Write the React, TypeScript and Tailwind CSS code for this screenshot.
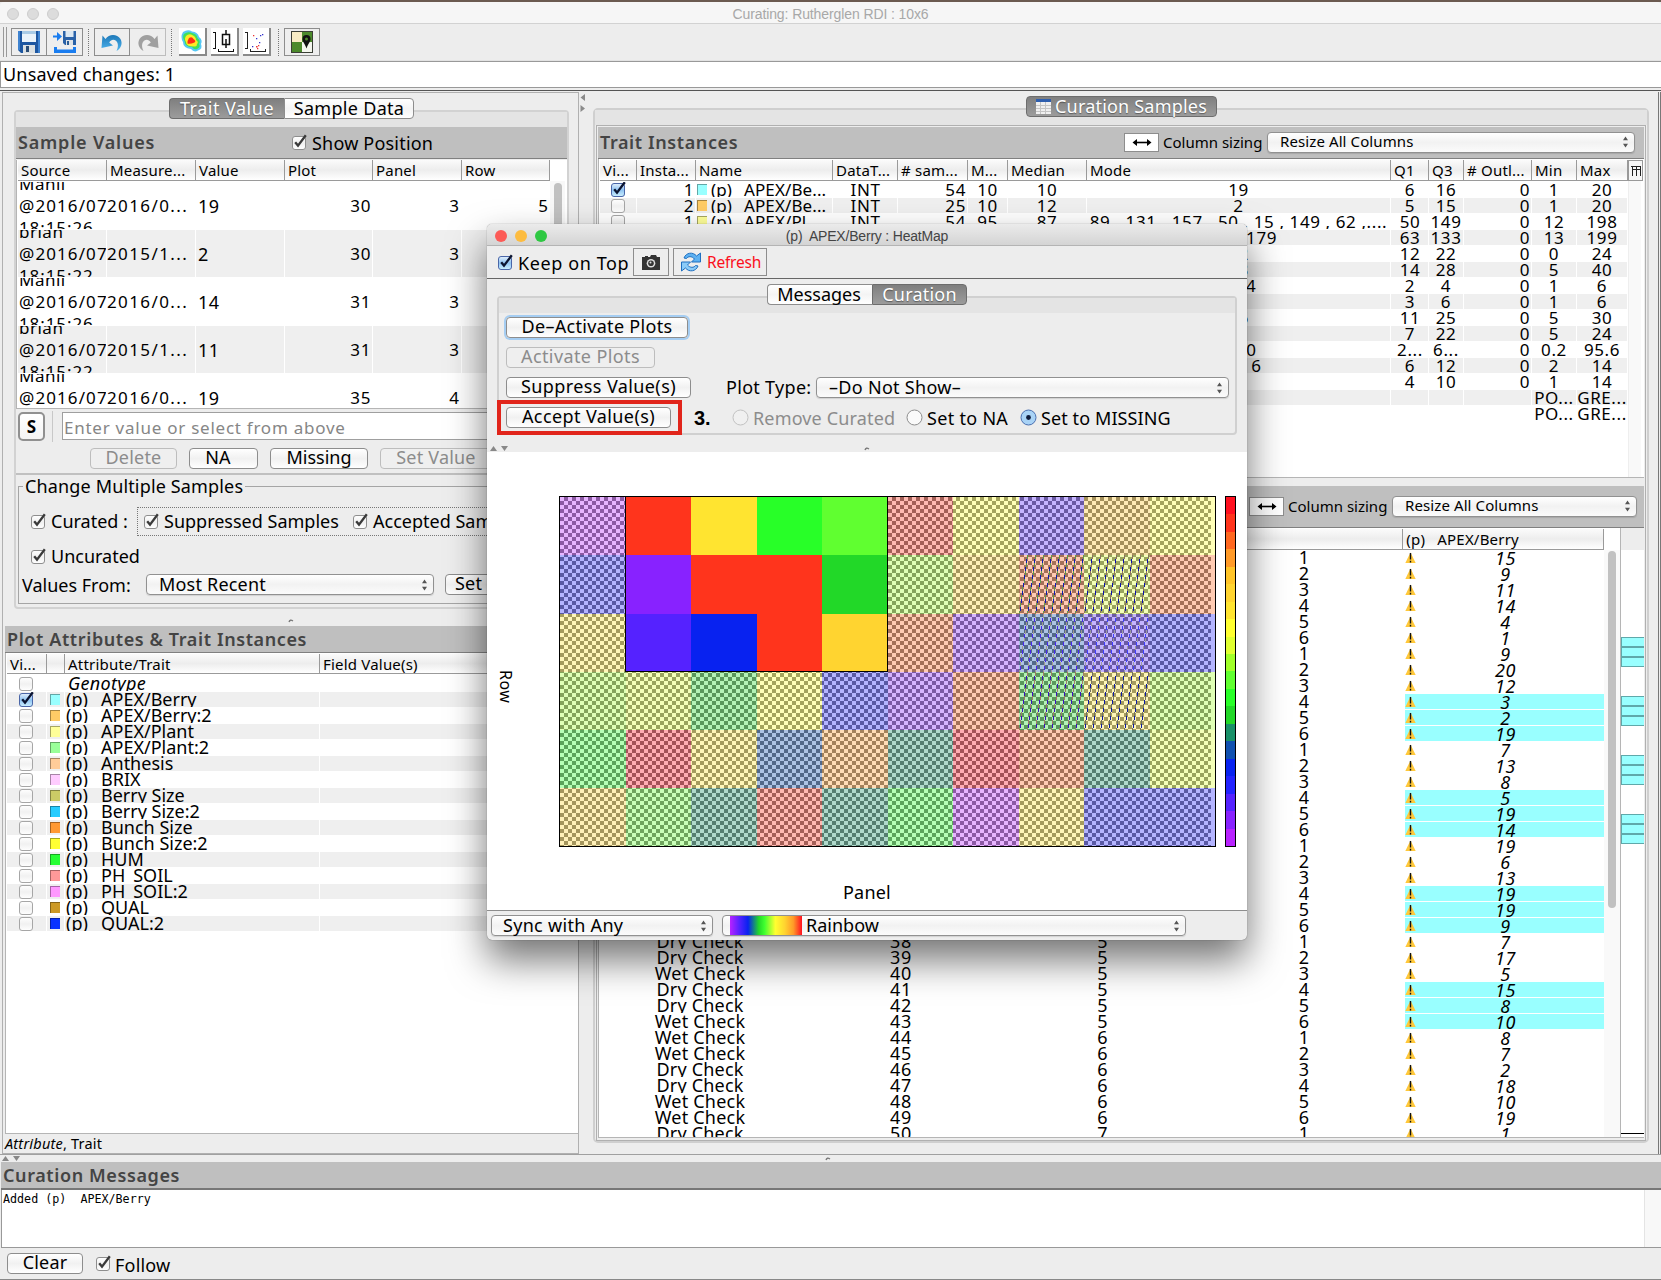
import React from "react";

const FONT = "font-['Noto_Sans','Open_Sans',sans-serif]";

function Check({ on = false, blue = false, dim = false }: { on?: boolean; blue?: boolean; dim?: boolean }) {
  return (
    <svg width="17" height="17" viewBox="0 0 17 17" className="block shrink-0">
      <defs>
        <linearGradient id="ckw" x1="0" y1="0" x2="0" y2="1">
          <stop offset="0" stopColor="#ffffff" />
          <stop offset="0.5" stopColor="#f1f1f1" />
          <stop offset="1" stopColor="#ffffff" />
        </linearGradient>
        <linearGradient id="ckb" x1="0" y1="0" x2="0" y2="1">
          <stop offset="0" stopColor="#e4f0fc" />
          <stop offset="0.5" stopColor="#8fc3f2" />
          <stop offset="1" stopColor="#cdf1ff" />
        </linearGradient>
      </defs>
      <rect x="1.5" y="2.5" width="13" height="13" rx="2.5" fill={blue ? "url(#ckb)" : "url(#ckw)"} stroke={blue ? "#4a66a8" : dim ? "#a6a6a6" : "#8e8e8e"} />
      {on && <path d="M4.2 8.2 L7 11.6 L14.8 1.2" fill="none" stroke={blue ? "#0b1430" : "#3a3a3a"} strokeWidth="2.3" />}
    </svg>
  );
}

function Btn({ children, className = "", dim = false }: { children: React.ReactNode; className?: string; dim?: boolean }) {
  return (
    <div
      className={
        "box-border flex h-[21px] shrink-0 items-center justify-center whitespace-nowrap rounded-[4px] border pb-[2px] text-[18px] leading-[19px] tracking-[0.2px] " +
        (dim
          ? "border-[#bdbdbd] bg-[#efefef] text-[#8c8c8c] "
          : "border-[#8d8d8d] bg-linear-to-b from-white via-[#f1f1f1] to-white text-black ") +
        className
      }
    >
      {children}
    </div>
  );
}

function Select({ children, className = "" }: { children: React.ReactNode; className?: string }) {
  return (
    <div
      className={
        "box-border flex h-[21px] shrink-0 items-center whitespace-nowrap rounded-[4px] border border-[#919191] bg-linear-to-b from-white via-[#f2f2f2] to-[#fbfbfb] pr-[5px] shadow-[0_1px_1px_rgba(0,0,0,0.12)] " +
        className
      }
    >
      <div className="flex min-w-0 flex-1 items-center pb-[1px]">{children}</div>
      <svg width="7" height="12" viewBox="0 0 7 12" className="shrink-0">
        <path d="M3.5 0.5 L6 4.3 H1 Z M3.5 11.5 L6 7.7 H1 Z" fill="#555" />
      </svg>
    </div>
  );
}

function Tab({ on = false, className = "", children }: { on?: boolean; className?: string; children: React.ReactNode }) {
  return (
    <div
      className={
        "box-border flex h-[21px] items-center justify-center whitespace-nowrap border text-[18px] leading-[19px] " +
        (on
          ? "border-[#6d6d6d] bg-linear-to-b from-[#7f7f7f] to-[#9c9c9c] text-white [text-shadow:0_1px_1px_rgba(0,0,0,0.4)] "
          : "border-[#8d8d8d] bg-linear-to-b from-white via-[#f4f4f4] to-white text-black ") +
        className
      }
    >
      {children}
    </div>
  );
}

const HEAD = "box-border flex h-[20px] shrink-0 border-b border-[#9a9a9a] bg-linear-to-b from-[#fbfbfb] via-[#ededed] to-white text-[15px] leading-[20px] tracking-[0.2px]";
const HCELL = "box-border overflow-hidden whitespace-nowrap border-r border-[#9a9a9a] pl-[3px]";
const TITLE = "text-[18px] font-semibold tracking-[0.6px] text-[#444]";

/* ---------- toolbar ---------- */

function ToolSep() {
  return <div className="h-[27px] w-0 border-l border-dotted border-[#777]" />;
}

function ToolBtn({ children, className = "" }: { children: React.ReactNode; className?: string }) {
  return <div className={"box-border flex h-[28px] items-center justify-center border border-[#8d8d8d] bg-[#eeeeee] " + className}>{children}</div>;
}

function Floppy({ size }: { size: number }) {
  return (
    <svg width={size} height={size} viewBox="0 0 22 22">
      <path d="M0 0 H22 V22 H3 L0 19 Z" fill="#1d56a0" />
      <path d="M0 0 H2 V19 H0 Z M20 0 H22 V22 H20 Z" fill="#3f83d0" />
      <rect x="4" y="0" width="14" height="11" fill="#eaf3fa" />
      <rect x="4" y="0" width="14" height="3" fill="#a9cbe6" />
      <rect x="5" y="14" width="12" height="8" fill="#dbe0e2" />
      <rect x="8" y="15" width="3" height="6" fill="#2b4d76" />
    </svg>
  );
}

function Toolbar() {
  return (
    <div className="flex h-[37px] shrink-0 items-center border-b border-[#e2e2e2] bg-[#ededed] pl-[3px]">
      <div className="h-[30px] w-[4px] border-x border-[#999]" />
      <div className="ml-[4px] flex">
        <ToolBtn className="w-[36px]"><Floppy size={22} /></ToolBtn>
        <ToolBtn className="w-[36px] border-l-0">
          <svg width="24" height="24" viewBox="0 0 24 24">
            <path d="M1 17 V23 H23 V17 H20 V19.500 H4 V17 Z" fill="#1a7df0" />
            <path d="M0 5.500 H4 V2 L9 6.500 L4 11 V7.500 H0 Z" fill="#1a7df0" />
            <path d="M10 1 H23 V15 H12 L10 13 Z" fill="#2a62a8" />
            <rect x="12.500" y="1" width="8" height="6" fill="#dce8f2" />
            <rect x="13" y="10" width="7" height="5" fill="#dfe3e6" />
            <rect x="14" y="11" width="2" height="4" fill="#2b5d96" />
          </svg>
        </ToolBtn>
      </div>
      <div className="mx-[5px]"><ToolSep /></div>
      <div className="flex">
        <ToolBtn className="w-[36px]">
          <svg width="24" height="22" viewBox="0 0 24 22">
            <defs>
              <linearGradient id="undo" x1="0" y1="0" x2="0" y2="1">
                <stop offset="0" stopColor="#1d78b8" />
                <stop offset="1" stopColor="#4fb4ee" />
              </linearGradient>
            </defs>
            <path d="M2.500 4.500 L5.500 8 C9 2.500 17 2.500 20.500 8 C23 12.500 21 17.500 16.500 20 C18.500 16 18.500 12 16 9.800 C13.500 7.800 11 8.500 9.200 11.500 L13 14.500 L1.500 17 Z" fill="url(#undo)" />
          </svg>
        </ToolBtn>
        <ToolBtn className="w-[36px] border-l-0 border-[#bdbdbd]">
          <svg width="24" height="22" viewBox="0 0 24 22">
            <path d="M21.500 4.500 L18.500 8 C15 2.500 7 2.500 3.500 8 C1 12.500 3 17.500 7.500 20 C5.500 16 5.500 12 8 9.800 C10.500 7.800 13 8.500 14.800 11.500 L11 14.500 L22.500 17 Z" fill="#a0a0a0" />
          </svg>
        </ToolBtn>
      </div>
      <div className="mr-[7px] ml-[5px]"><ToolSep /></div>
      <div className="flex gap-[4px]">
        <div className="box-border flex h-[28px] w-[28px] items-center justify-center border-r-2 border-b-2 border-[#8a8a8a] bg-white">
          <svg width="24" height="24" viewBox="0 0 24 24">
            <defs><filter id="hb"><feGaussianBlur stdDeviation="0.7" /></filter></defs>
            <g filter="url(#hb)">
              <path d="M3 3 Q8 0 12 2.500 Q18 3 19 8 Q23 11 21 15 Q23 20 18 21.500 Q14 24 11 20 Q3 19 3 13 Q0 8 3 3" fill="#55c8f5" />
              <path d="M4 5 Q8 2 12 4 Q17 5 17.500 9 Q21 12 19 15 Q21 18 17 20 Q14 21 12 18 Q5 18 4.500 12 Q2 8 4 5" fill="#3fe05a" />
              <path d="M6 7 Q9 4 13 6.500 Q16 8 16 11 Q19 13 17 15 Q17 18 14.500 17.500 Q6 17.500 6 13 Q4 10 6 7" fill="#ffe927" />
              <path d="M9 9 Q12 7 13.500 10 Q16.500 12 14.500 13.500 Q10 15.500 7.500 14.500 Q7 12 9 9" fill="#ff2a12" />
            </g>
          </svg>
        </div>
        <div className="box-border flex h-[28px] w-[28px] items-center justify-center border-r-2 border-b-2 border-[#8a8a8a] bg-white">
          <svg width="24" height="24" viewBox="0 0 24 24" fill="none" stroke="#111">
            <path d="M3.500 3 V20 M1 3.500 H4 M1 19.500 H4 M6 22.500 H22 M6.500 20 V23 M21.500 20 V23" strokeWidth="1" />
            <path d="M10.500 5.500 H17.500 V15.500 H10.500 Z M14 1 V6 M14 10 V19" strokeWidth="1.500" />
          </svg>
        </div>
        <div className="box-border flex h-[28px] w-[28px] items-center justify-center border-r-2 border-b-2 border-[#8a8a8a] bg-white">
          <svg width="24" height="24" viewBox="0 0 24 24">
            <path d="M3.500 3 V20 M1 3.500 H4 M1 19.500 H4 M6 22.500 H22 M6.500 20 V23 M21.500 20 V23" fill="none" stroke="#222" />
            <path d="M18 5h1.300v1.300h-1.300z M16 6h1.300v1.300h-1.300z M12 9h1.300v1.300h-1.300z M8 17h1.300v1.300h-1.300z M15 13h1.300v1.300h-1.300z" fill="#33c" />
            <path d="M9 6h1.300v1.300h-1.300z M12 17h1.600v1.600h-1.600z M14 16h1.300v1.300h-1.300z M13 19h1.300v1.300h-1.300z" fill="#e33" />
          </svg>
        </div>
      </div>
      <div className="mr-[5px] ml-[7px]"><ToolSep /></div>
      <ToolBtn className="w-[36px]">
        <svg width="22" height="22" viewBox="0 0 22 22">
          <rect x="0.500" y="0.500" width="21" height="21" fill="#4c8a2c" stroke="#3b3f36" />
          <rect x="1" y="1" width="10" height="10" fill="#f8ecc4" />
          <rect x="11" y="11" width="10" height="10" fill="#f4f6ee" />
          <path d="M15.500 17.500 C13.500 12 11.500 10.500 11.500 8 A4 4 0 0 1 19.500 8 C19.500 10.500 17.500 12 15.500 17.500" fill="#111" />
          <circle cx="15.500" cy="8" r="1.500" fill="#4c8a2c" />
        </svg>
      </ToolBtn>
    </div>
  );
}

/* ---------- left column ---------- */

const samples = [
  ["Manil", "2016/0...", "18:15:26", "19", "30", "3", "5"],
  ["brian", "2015/1...", "18:15:22", "2", "30", "3", "5"],
  ["Manil", "2016/0...", "18:15:26", "14", "31", "3", "6"],
  ["brian", "2015/1...", "18:15:22", "11", "31", "3", "6"],
  ["Manil", "2016/0...", "18:15:26", "19", "35", "4", "1"],
];

function SampleTable() {
  return (
    <div className="mt-[1px] flex h-[249px] shrink-0 flex-col overflow-hidden border-b border-l border-[#b5b5b5] bg-white pl-[1px]">
      <div className={HEAD + " h-[21px] w-[532px]"}>
        <div className={HCELL + " w-[89px]"}>Source</div>
        <div className={HCELL + " w-[89px]"}>Measure...</div>
        <div className={HCELL + " w-[89px]"}>Value</div>
        <div className={HCELL + " w-[88px]"}>Plot</div>
        <div className={HCELL + " w-[89px]"}>Panel</div>
        <div className={HCELL + " w-[88px]"}>Row</div>
      </div>
      <div className="flex flex-1 overflow-hidden">
        <div className="w-[532px] pt-[1px] text-[17px]">
          {samples.map((s, i) => {
            const c = i % 2 ? "bg-[#efefef]" : "bg-white";
            return (
              <div key={i} className="mb-[1px] flex h-[47px] gap-[1px] overflow-hidden leading-[22px]">
                <div className={"flex w-[88px] flex-col justify-center overflow-hidden pl-px tracking-[0.5px] " + c}>
                  <div className="h-[22px] shrink-0">{s[0]}</div>
                  <div className="h-[22px] shrink-0 tracking-[1.1px] whitespace-nowrap">@2016/07</div>
                  <div className="h-[22px] shrink-0 whitespace-nowrap tracking-[0.9px]">{s[2]}</div>
                </div>
                <div className={"flex w-[88px] items-center tracking-[1.4px] " + c}>{s[1]}</div>
                <div className={"flex w-[88px] items-center pl-[2px] text-[18px] tracking-[0.5px] " + c}>{s[3]}</div>
                <div className={"flex w-[87px] items-center justify-end pr-[1px] tracking-[0.6px] " + c}>{s[4]}</div>
                <div className={"flex w-[88px] items-center justify-end pr-[2px] " + c}>{s[5]}</div>
                <div className={"flex w-[88px] items-center justify-end pr-[2px] " + c}>{s[6]}</div>
              </div>
            );
          })}
        </div>
        <div className="flex w-[15px] justify-center bg-[#f8f8f8] pt-[2px]">
          <div className="h-[120px] w-[8px] rounded-full bg-[#c1c1c1]" />
        </div>
      </div>
    </div>
  );
}

const traits: [string, string][] = [
  ["APEX/Berry", "bg-[#99ffff]"],
  ["APEX/Berry:2", "bg-[#ffcc66]"],
  ["APEX/Plant", "bg-[#ffff99]"],
  ["APEX/Plant:2", "bg-[#99ff99]"],
  ["Anthesis", "bg-[#ffcc99]"],
  ["BRIX", "bg-[#ffccff]"],
  ["Berry Size", "bg-[#cccc66]"],
  ["Berry Size:2", "bg-[#26ccff]"],
  ["Bunch Size", "bg-[#ff9933]"],
  ["Bunch Size:2", "bg-[#ffff33]"],
  ["HUM", "bg-[#26ff33]"],
  ["PH_SOIL", "bg-[#ff9999]"],
  ["PH_SOIL:2", "bg-[#ff99ff]"],
  ["QUAL", "bg-[#cc9926]"],
  ["QUAL:2", "bg-[#0a33ff]"],
];

function AttributeTable() {
  return (
    <div className="flex h-[481px] flex-col border-b border-l border-[#b5b5b5] bg-white pt-[1px] pl-[1px]">
      <div className={HEAD}>
        <div className={HCELL + " w-[40px]"}>Vi...</div>
        <div className={HCELL + " w-[18px]"} />
        <div className={HCELL + " w-[255px]"}>Attribute/Trait</div>
        <div className="pl-[3px]">Field Value(s)</div>
      </div>
      <div className="pt-[2px] text-[18px]">
        <div className="mb-[1px] flex h-[15px] overflow-hidden leading-[15px]">
          <div className="-mt-[1px] w-[58px] pl-[11px]"><Check dim /></div>
          <div className="pl-[3px] tracking-[0.3px] italic">Genotype</div>
        </div>
        {traits.map(([name, color], i) => {
          const bg = i % 2 ? "bg-white" : "bg-[#efefef]";
          return (
            <div key={name} className="mb-[1px] flex h-[15px] gap-[1px] overflow-hidden leading-[14px]">
              <div className={"w-[39px] pl-[11px] " + bg}><div className="-mt-[1px]"><Check on={i === 0} blue={i === 0} dim /></div></div>
              <div className={"flex w-[17px] items-center pl-[3px] " + bg}>
                <div className={"h-[11px] w-[10px] border-t border-l border-black/35 " + color} />
              </div>
              <div className={"flex w-[254px] overflow-hidden whitespace-nowrap pl-[1px] " + bg}>
                <span className="w-[35px]">(p)</span>
                <span>{name}</span>
              </div>
              <div className={"flex-1 " + bg} />
            </div>
          );
        })}
      </div>
    </div>
  );
}

function LeftColumn() {
  return (
    <div className="box-border flex h-[1062px] w-[577px] shrink-0 flex-col border border-[#b0b0b0]">
      <div className="mt-[17px] ml-[11px] box-border flex h-[499px] w-[555px] flex-col rounded-[4px] border-2 border-[#d2d2d2] bg-[#ededed]">
        <div className="flex h-[15px] shrink-0 justify-center bg-[#e4e4e4]">
          <div className="-mt-[14px] flex">
            <Tab on className="w-[115px] rounded-l-[4px] border-r-0 tracking-[0.5px]">Trait Value</Tab>
            <Tab className="w-[130px] rounded-r-[4px] tracking-[0.3px]">Sample Data</Tab>
          </div>
        </div>
        <div className="box-border flex h-[32px] shrink-0 items-center border-b border-[#808080] bg-[#bfbfbf]">
          <div className="w-[275px] pl-[2px] text-[18px] font-semibold tracking-[0.8px] text-[#444]">Sample Values</div>
          <Check on />
          <span className="pt-[2px] pl-[4px] text-[18px] tracking-[0.2px]">Show Position</span>
        </div>
        <SampleTable />
        <div className="flex h-[34px] shrink-0 items-center">
          <div className="ml-[2px] box-border flex h-[29px] w-[27px] items-center justify-center rounded-[5px] border-2 border-[#909090] bg-linear-to-b from-white to-[#f4f4f4] pt-[2px] text-[17px] font-bold">S</div>
          <div className="ml-[7px] h-[31px] w-px bg-[#c8c8c8]" />
          <div className="ml-[9px] box-border flex h-[28px] flex-1 items-center border border-[#9f9f9f] bg-white pt-[3px] pl-[1px] text-[17px] tracking-[0.75px] whitespace-nowrap text-[#868686]">Enter value or select from above</div>
        </div>
        <div className="flex h-[32px] shrink-0 items-center border-b-2 border-[#c0c0c0] pt-[1px] pl-[74px]">
          <Btn dim className="w-[87px]">Delete</Btn>
          <Btn className="ml-[12px] w-[69px] pr-[11px]">NA</Btn>
          <Btn className="ml-[12px] w-[98px] tracking-normal">Missing</Btn>
          <Btn dim className="ml-[12px] w-[112px]">Set Value</Btn>
        </div>
        <fieldset className="mt-[1px] ml-[2px] box-border h-[128px] w-[544px] min-w-0 border border-[#a5a5a5]">
          <legend className="ml-[4px] h-[20px] px-[2px] text-[18px] leading-[21px] tracking-[0.15px]">Change Multiple Samples</legend>
          <div className="mt-[11px] flex h-[29px] items-center text-[18px]">
            <div className="w-[32px] pl-[11px]"><Check on /></div>
            <span className="w-[86px]">Curated :</span>
            <div className="box-border flex h-[29px] flex-1 items-center overflow-hidden border border-dotted border-[#777] pl-[5px] whitespace-nowrap">
              <Check on />
              <span className="w-[192px] pl-[4px]">Suppressed Samples</span>
              <Check on />
              <span className="pl-[4px]">Accepted Samples</span>
            </div>
          </div>
          <div className="mt-[9px] flex h-[22px] items-center text-[18px]">
            <div className="w-[32px] pl-[11px]"><Check on /></div>
            <span>Uncurated</span>
          </div>
          <div className="mt-[6px] flex h-[23px] items-center text-[18px]">
            <span className="w-[127px] pt-[2px] pl-[3px]">Values From:</span>
            <Select className="w-[288px] pl-[12px] tracking-[0.2px]">Most Recent</Select>
            <Btn className="ml-[11px] w-[90px] justify-start pl-[9px]">Set</Btn>
          </div>
        </fieldset>
      </div>
      <div className="flex h-[17px] shrink-0 items-end pb-[3px] pl-[285px]">
        <svg width="6" height="4"><path d="M1 3 Q2 0 5 2" fill="none" stroke="#777" strokeWidth="1.300" /></svg>
      </div>
      <div className={"ml-[2px] box-border h-[27px] shrink-0 border-b border-[#808080] bg-[#bfbfbf] pl-[2px] leading-[27px] " + TITLE}>Plot Attributes &amp; Trait Instances</div>
      <div className="ml-[2px]"><AttributeTable /></div>
      <div className="pl-[2px] text-[14.500px] leading-[19px] tracking-[0.2px]"><i>Attribute</i>, Trait</div>
    </div>
  );
}

/* ---------- right column ---------- */

function SizingControls({ selectClass }: { selectClass: string }) {
  return (
    <>
      <div className="box-border flex h-[19px] w-[35px] items-center justify-center border border-[#8d8d8d] bg-white">
        <svg width="20" height="9" viewBox="0 0 20 9">
          <path d="M3 4.500 H17" stroke="#000" strokeWidth="1.600" />
          <path d="M0.500 4.500 L5 1 V8 Z M19.500 4.500 L15 1 V8 Z" fill="#000" />
        </svg>
      </div>
      <span className="w-[108px] pl-[4px] text-[15px] whitespace-nowrap">Column sizing</span>
      <Select className={"pl-[12px] text-[15px] tracking-[0.1px] " + selectClass}>Resize All Columns</Select>
    </>
  );
}

type InstRow = { n?: string; name: string; color: string; cells: string[]; mode: string; q: string[] };
const inst: InstRow[] = [
  { n: "1", name: "APEX/Be...", color: "bg-[#99ffff]", cells: ["INT", "54", "10", "10"], mode: "19", q: ["6", "16", "0", "1", "20"] },
  { n: "2", name: "APEX/Be...", color: "bg-[#ffcc66]", cells: ["INT", "25", "10", "12"], mode: "2", q: ["5", "15", "0", "1", "20"] },
  { n: "1", name: "APEX/Pl...", color: "bg-[#ffff99]", cells: ["INT", "54", "95", "87"], mode: "89 , 131 , 157 , 50 , 15 , 149 , 62 ,....", q: ["50", "149", "0", "12", "198"] },
  { n: "2", name: "APEX/Pl...", color: "bg-[#99ff99]", cells: ["INT", "25", "98", "99"], mode: "107 , 179", q: ["63", "133", "0", "13", "199"] },
  { n: "1", name: "Anthesis", color: "bg-[#ffcc99]", cells: ["INT", "54", "17", "17"], mode: "22", q: ["12", "22", "0", "0", "24"] },
  { n: "1", name: "BRIX", color: "bg-[#ffccff]", cells: ["INT", "54", "21", "21"], mode: "23", q: ["14", "28", "0", "5", "40"] },
  { n: "1", name: "Berry Size", color: "bg-[#cccc66]", cells: ["INT", "54", "3", "3"], mode: "2 , 4", q: ["2", "4", "0", "1", "6"] },
  { n: "2", name: "Berry Size", color: "bg-[#26ccff]", cells: ["INT", "25", "4", "4"], mode: "5", q: ["3", "6", "0", "1", "6"] },
  { n: "1", name: "Bunch Size", color: "bg-[#ff9933]", cells: ["INT", "54", "18", "18"], mode: "26", q: ["11", "25", "0", "5", "30"] },
  { n: "2", name: "Bunch Size", color: "bg-[#ffff33]", cells: ["INT", "25", "14", "14"], mode: "9", q: ["7", "22", "0", "5", "24"] },
  { n: "1", name: "HUM", color: "bg-[#26ff33]", cells: ["DEC", "54", "45", "45"], mode: "50.0", q: ["2...", "6...", "0", "0.2", "95.6"] },
  { n: "1", name: "PH_SOIL", color: "bg-[#ff9999]", cells: ["INT", "54", "9", "9"], mode: "12 , 6", q: ["6", "12", "0", "2", "14"] },
  { n: "2", name: "PH_SOIL", color: "bg-[#ff99ff]", cells: ["INT", "25", "7", "7"], mode: "7", q: ["4", "10", "0", "1", "14"] },
  { n: "1", name: "QUAL", color: "bg-[#cc9926]", cells: ["CAT", "54", "", ""], mode: "", q: ["", "", "", "PO...", "GRE..."] },
  { n: "2", name: "QUAL", color: "bg-[#0a33ff]", cells: ["CAT", "25", "", ""], mode: "", q: ["", "", "", "PO...", "GRE..."] },
];

const COLS = "grid grid-cols-[37px_59px_137px_65px_70px_40px_79px_304px_38px_35px_68px_45px_51px]";
const instHeads = ["Vi...", "Insta...", "Name", "DataT...", "# sam...", "M...", "Median", "Mode", "Q1", "Q3", "# Outl...", "Min", "Max"];

function InstanceTable() {
  return (
    <div className="box-border flex h-[319px] shrink-0 flex-col border-b border-l border-[#b5b5b5] bg-white pt-[1px] pl-[1px]">
      <div className="flex">
        <div className={HEAD + " h-[21px] w-[1028px]"}>
          <div className={COLS}>
            {instHeads.map((h) => (
              <div key={h} className={HCELL}>{h}</div>
            ))}
          </div>
        </div>
        <div className="box-border flex h-[21px] w-[15px] items-center justify-center border border-[#999] bg-[#f6f6f6]">
          <svg width="10" height="11" viewBox="0 0 10 11"><path d="M0 1.500 H10 M1 4.500 H9 M1.500 1 V11 M5.500 1 V11 M9.500 1 V11" stroke="#222" fill="none" /></svg>
        </div>
      </div>
      <div className="flex flex-1">
        <div className="w-[1028px] pt-[1px] text-[17px] leading-[15px]">
          {inst.map((r, i) => {
            const bg = i % 2 ? " bg-[#efefef]" : " bg-white";
            const c = "mr-[1px] h-[15px] overflow-hidden whitespace-nowrap" + bg;
            return (
              <div key={i} className={COLS + " mb-[1px] tracking-[0.6px]"}>
                <div className={c + " pl-[10px]"}><div className="-mt-[1px]"><Check on={i === 0} blue={i === 0} dim /></div></div>
                <div className={c + " pr-[1px] text-right"}>{r.n}</div>
                <div className={c + " flex pl-[1px] tracking-[0.1px]"}>
                  <div className={"mt-[2px] h-[11px] w-[10px] shrink-0 border-t border-l border-black/35 " + r.color} />
                  <span className="w-[37px] shrink-0 pl-[4px]">(p)</span>
                  <span>{r.name}</span>
                </div>
                <div className={c + " pl-[1px] text-center"}>{r.cells[0]}</div>
                <div className={c + " pr-[1px] text-right"}>{r.cells[1]}</div>
                <div className={c + " text-center"}>{r.cells[2]}</div>
                <div className={c + " text-center"}>{r.cells[3]}</div>
                <div className={c + " text-center"}>{r.mode}</div>
                <div className={c + " pl-[1px] text-center"}>{r.q[0]}</div>
                <div className={c + " text-center"}>{r.q[1]}</div>
                <div className={c + " pr-[1px] text-right"}>{r.q[2]}</div>
                <div className={c + " text-center"}>{r.q[3]}</div>
                <div className={c + " text-center"}>{r.q[4]}</div>
              </div>
            );
          })}
        </div>
        <div className="w-[13px] border-l border-[#eee] bg-[#f9f9f9]" />
      </div>
    </div>
  );
}

const values = [15, 9, 11, 14, 4, 1, 9, 20, 12, 3, 2, 19, 7, 13, 8, 5, 19, 14, 19, 6, 13, 19, 19, 9, 7, 17, 5, 15, 8, 10, 8, 7, 2, 18, 10, 19, 1];
const plotKinds = "DWDWDWWDDWDWDWDWDWDWDWWDDDWDDWWWDDWWD";

function Warn() {
  return (
    <svg width="11" height="12" viewBox="0 0 11 12" className="shrink-0">
      <path d="M5.500 0.500 L10.700 11 H0.300 Z" fill="#ffc83a" />
      <path d="M5.500 1 V7.500 M5.500 8.700 V10.500" stroke="#111" strokeWidth="1.400" />
    </svg>
  );
}

function PlotTable() {
  return (
    <div className="box-border flex h-[610px] border-b border-l border-[#b5b5b5] bg-white pl-[1px]">
      <div className="flex w-[1005px] flex-col overflow-hidden pt-[1px]">
        <div className={HEAD + " h-[21px] leading-[20px]"}>
          <div className={HCELL + " w-[201px]"}>Plot Type</div>
          <div className={HCELL + " w-[201px]"}>Plot</div>
          <div className={HCELL + " w-[201px]"}>Panel</div>
          <div className={HCELL + " w-[201px]"}>Row</div>
          <div className={HCELL + " w-[201px] whitespace-pre [word-spacing:2px]"}>{"(p)  APEX/Berry"}</div>
        </div>
        <div className="flex-1 overflow-hidden text-[18px] leading-[14px]">
          {values.map((v, i) => {
            const cyan = i >= 9 && Math.floor((i - 9) / 3) % 2 === 0 && i < 30;
            return (
              <div key={i} className="mb-[1px] flex h-[15px] overflow-hidden text-center">
                <div className="w-[200px] tracking-[0.2px]">{plotKinds[i] === "D" ? "Dry Check" : "Wet Check"}</div>
                <div className="w-[202px] tracking-[0.6px]">{i + 14}</div>
                <div className="w-[201px]">{Math.floor(i / 6) + 1}</div>
                <div className="w-[202px]">{(i % 6) + 1}</div>
                <div className={"flex w-[199px] items-center " + (cyan ? "bg-[#99ffff]" : "")}>
                  <Warn />
                  <span className="flex-1 pr-[9px] leading-[14px] tracking-[0.6px] italic">{v}</span>
                </div>
              </div>
            );
          })}
        </div>
      </div>
      <div className="flex w-[17px] flex-col items-center border-r border-[#b5b5b5]">
        <div className="h-[22px] w-full shrink-0" />
        <div className="flex w-full flex-1 justify-center bg-[#f9f9f9] pt-[1px]">
          <div className="h-[357px] w-[8px] rounded-full bg-[#c1c1c1]" />
        </div>
      </div>
      <div className="flex w-[23px] flex-col">
        <div className="h-[22px] shrink-0 bg-[#ededed]" />
        <div className="mb-[3px] flex flex-1 flex-col gap-[29px] border-b border-black pt-[87px]">
          {[0, 1, 2, 3].map((g) => (
            <div key={g} className="flex h-[30px] shrink-0 flex-col">
              <div className="h-[10px] border border-r-0 border-[#5fa8aa] bg-[#99ffff]" />
              <div className="h-[10px] border border-r-0 border-[#5fa8aa] bg-[#99ffff]" />
              <div className="h-[10px] border border-r-0 border-[#5fa8aa] bg-[#99ffff]" />
            </div>
          ))}
        </div>
      </div>
    </div>
  );
}

function RightColumn() {
  return (
    <div className="flex flex-1">
      <div className="flex w-[14px] shrink-0 flex-col pt-[2px] pl-[1px]">
        <svg width="6" height="18" viewBox="0 0 6 18"><path d="M5 0 V7 L0.500 3.500 Z M0.500 11 V18 L5 14.500 Z" fill="#8a8a8a" /></svg>
      </div>
      <div className="mt-[16px] box-border flex h-[1035px] w-[1056px] flex-col rounded-[5px] border-2 border-[#cfcfcf]">
        <div className="flex h-[15px] shrink-0 justify-center bg-[#e4e4e4] pl-[1px]">
          <Tab on className="-mt-[14px] w-[191px] gap-[4px] rounded-[4px] tracking-[0.2px]">
            <svg width="15" height="15" viewBox="0 0 15 15"><rect width="15" height="15" fill="#f0f0f0" /><rect width="15" height="3" fill="#2f5fae" /><path d="M0 6.500 H15 M0 9.500 H15 M0 12.500 H15 M4.500 3 V15 M9.500 3 V15" stroke="#c4c4c4" /></svg>
            Curation Samples
          </Tab>
        </div>
        <div className="mx-[1px] box-border flex flex-1 flex-col border border-[#b0b0b0] bg-[#ededed] px-[1px] pt-[1px]">
          <div className="box-border flex h-[32px] shrink-0 items-center border-b border-[#808080] bg-[#bfbfbf] pb-[1px]">
            <div className={"flex-1 pl-[2px] " + TITLE}>Trait Instances</div>
            <SizingControls selectClass="w-[368px] mr-[9px]" />
          </div>
          <InstanceTable />
          <div className="mt-[8px] box-border flex h-[42px] shrink-0 items-center border-b border-[#808080] bg-[#bfbfbf] pb-[1px]">
            <div className={"flex-1 pl-[2px] " + TITLE}>Plots</div>
            <SizingControls selectClass="w-[245px] mr-[7px]" />
          </div>
          <PlotTable />
        </div>
      </div>
      <div className="ml-auto h-full w-[3px] border-x border-[#777]" />
    </div>
  );
}

/* ---------- heat map window ---------- */

const ramp = [
  "#b822ff", "#8822ff", "#5522ff", "#2222ff", "#0822f0", "#1050b0", "#189068", "#22d828", "#28ff28", "#60ff30",
  "#a0ff28", "#e0ff30", "#ffff30", "#ffe430", "#ffd430", "#ffc428", "#ff9a28", "#ff6820", "#ff341c", "#ff1020",
];
const heat = [
  [1, 19, 14, 9, 10, 19, 13, 3, 16, 13],
  [4, 2, 19, 19, 8, 11, 15, 18, 12, 18],
  [14, 3, 5, 19, 15, 18, 2, 6, 3, 4],
  [11, 12, 8, 13, 4, 2, 18, 8, 14, 11],
  [9, 20, 14, 6, 17, 7, 20, 18, 7, 12],
  [15, 10, 7, 19, 7, 9, 1, 14, 4, 4],
];
const hatched: Record<string, [string, string]> = {
  "1-7": ["#0a1eb4", "#5a9a50"],
  "1-8": ["#0a0eb0", "#8a7060"],
  "2-7": ["#4a28f0", "#a09890"],
  "2-8": ["#4040ff", "#9a9aa0"],
  "3-7": ["#3a10c0", "#a07868"],
  "3-8": ["#0a18a8", "#707060"],
};
const steps = Array.from({ length: 15 }, (_, i) => i);

function HeatMap() {
  const cw = 65.55;
  const ch = 58.25;
  return (
    <svg width="657" height="351" viewBox="0 0 657 351" className="block">
      <defs>
        <pattern id="checker" width="8" height="8" patternUnits="userSpaceOnUse" x="1" y="1">
          <rect x="4" y="0" width="4" height="4" fill="#767676" />
          <rect x="0" y="4" width="4" height="4" fill="#767676" />
        </pattern>
      </defs>
      <rect width="651" height="349" x="1" y="1" fill="url(#checker)" />
      {heat.map((row, r) =>
        row.map((v, c) => {
          const solid = r < 3 && c > 0 && c < 5;
          return (
            <rect key={r + "-" + c} x={1 + Math.round(c * cw)} y={1 + Math.round(r * ch)} width={Math.round((c + 1) * cw) - Math.round(c * cw)} height={Math.round((r + 1) * ch) - Math.round(r * ch)} fill={ramp[v - 1]} fillOpacity={solid ? 1 : 0.34} shapeRendering="crispEdges" />
          );
        }),
      )}
      {Object.entries(hatched).map(([key, [a, b]]) => {
        const [r, c] = key.split("-").map(Number);
        const x0 = 1 + Math.round(c * cw);
        const y0 = 1 + Math.round(r * ch);
        return (
          <g key={key} shapeRendering="crispEdges">
            {steps.slice(0, 8).map((k) =>
              steps.map((s) => (
                <rect key={k + "_" + s} x={x0 + 8 * k + 8 - Math.round((s * 8) / 14)} y={y0 + s * 4} width="1" height={s === 14 ? 2 : 4} fill={s % 2 ? a : b} />
              )),
            )}
          </g>
        );
      })}
      <rect x="66.500" y="0.500" width="262" height="175" fill="none" stroke="#000" />
      <rect x="0.500" y="0.500" width="656" height="350" fill="none" stroke="#000" />
    </svg>
  );
}

function Radio({ on = false, dim = false }: { on?: boolean; dim?: boolean }) {
  return (
    <svg width="17" height="17" viewBox="0 0 17 17" className="shrink-0">
      <circle cx="8.500" cy="8.500" r="7.500" fill={on ? "#a9d3f6" : dim ? "#f0f0f0" : "#fafafa"} stroke={on ? "#4a6fb0" : dim ? "#c2c2c2" : "#8e8e8e"} />
      {on && <circle cx="8.500" cy="8.500" r="2.400" fill="#101c3c" />}
    </svg>
  );
}

function Dialog() {
  return (
    <div className="absolute top-[224px] left-[487px] flex h-[716px] w-[760px] flex-col overflow-hidden rounded-[5px] bg-[#ededed] shadow-[0_0_1px_rgba(0,0,0,0.6),0_20px_38px_rgba(0,0,0,0.55)]">
      <div className="grid h-[22px] shrink-0 grid-cols-[1fr_auto_1fr] items-center border-b border-[#b4b4b4] bg-linear-to-b from-[#ebebeb] to-[#d4d4d4]">
        <div className="flex gap-[8px] pl-[8px]">
          <div className="size-[12px] rounded-full bg-[#fc5b57]" />
          <div className="size-[12px] rounded-full bg-[#fdbc40]" />
          <div className="size-[12px] rounded-full bg-[#2fc843]" />
        </div>
        <div className="pt-[2px] font-['Liberation_Sans',sans-serif] text-[14px] tracking-[-0.2px] whitespace-pre text-[#444]">{"(p)  APEX/Berry : HeatMap"}</div>
        <div />
      </div>
      <div className="flex h-[33px] shrink-0 items-center border-b border-[#666] pl-[10px]">
        <Check on blue />
        <span className="w-[119px] pt-[2px] pl-[4px] text-[18px] tracking-[0.6px]">Keep on Top</span>
        <ToolBtn className="w-[36px]">
          <svg width="18" height="15" viewBox="0 0 18 15">
            <path d="M1 2 H3 V1 H6 V2 H8 L9 0 H14 L15 2 H18 V15 H0 V2 Z" fill="#333" />
            <circle cx="9" cy="8.300" r="4.300" fill="#ddd" />
            <circle cx="9" cy="8.300" r="2.800" fill="#333" />
            <circle cx="8.500" cy="7.500" r="1" fill="#ddd" />
          </svg>
        </ToolBtn>
        <ToolBtn className="ml-[4px] w-[94px] justify-start gap-[5px] pl-[6px]">
          <svg width="22" height="22" viewBox="0 0 22 22">
            <path d="M4 7 C6 1.500 13 0.500 16.500 5 L20.500 2 V11 H11.500 L14.500 8 C12 5 8 5 6.500 7.500 Z" fill="#5db1f2" stroke="#1f6fc0" strokeWidth="1" />
            <path d="M18 15 C16 20.500 9 21.500 5.500 17 L1.500 20 V11 H10.500 L7.500 14 C10 17 14 17 15.500 14.500 Z" fill="#8bcbf8" stroke="#1f6fc0" strokeWidth="1" />
          </svg>
          <span className="pt-[1px] text-[15.500px] tracking-[-0.200px] text-[#fb0f20]">Refresh</span>
        </ToolBtn>
      </div>
      <div className="mt-[17px] ml-[10px] box-border flex h-[139px] w-[740px] shrink-0 flex-col rounded-[4px] border-2 border-[#d0d0d0]">
        <div className="flex h-[15px] shrink-0 justify-center bg-[#e4e4e4]">
          <div className="-mt-[14px] flex">
            <Tab className="w-[105px] rounded-l-[4px] border-r-0 pr-[2px]">Messages</Tab>
            <Tab on className="w-[95px] rounded-r-[4px] tracking-[0.2px]">Curation</Tab>
          </div>
        </div>
        <div className="flex flex-1 flex-col pt-[4px] pl-[7px]">
          <div className="h-[30px]"><Btn className="w-[182px] border-[#7fb2e4] tracking-[0.3px] shadow-[0_0_0_2px_#a5cdf2]">De–Activate Plots</Btn></div>
          <div className="h-[30px]"><Btn dim className="w-[149px] tracking-[0.4px]">Activate Plots</Btn></div>
          <div className="flex h-[30px] items-start">
            <Btn className="w-[185px] tracking-[0.4px]">Suppress Value(s)</Btn>
            <span className="ml-[35px] w-[90px] text-[18px] leading-[20px] tracking-[0.3px]">Plot Type:</span>
            <Select className="w-[413px] pl-[12px] text-[18px] tracking-[0.3px]">–Do Not Show–</Select>
          </div>
          <div className="relative flex h-[21px] items-center text-[18px]">
            <Btn className="w-[165px] tracking-[0.4px]">Accept Value(s)</Btn>
            <div className="absolute -top-[7px] -left-[9px] box-border h-[35px] w-[185px] border-4 border-[#e1251b]" />
            <span className="ml-[23px] w-[38px] font-['Liberation_Sans',sans-serif] text-[20px] font-bold">3.</span>
            <Radio dim />
            <span className="w-[157px] pt-[1px] pl-[4px] tracking-[0.15px] text-[#8c8c8c]">Remove Curated</span>
            <Radio />
            <span className="w-[97px] pt-[1px] pl-[4px] tracking-[0.3px]">Set to NA</span>
            <Radio on />
            <span className="pt-[1px] pl-[4px] tracking-[0.1px] whitespace-nowrap">Set to MISSING</span>
          </div>
        </div>
      </div>
      <div className="flex h-[17px] shrink-0 items-end pl-[3px]">
        <svg width="19" height="6"><path d="M0 5 L3.500 0 L7 5 Z M11 0 H18 L14.500 5 Z" fill="#888" /></svg>
        <svg width="6" height="4" className="mb-[1px] ml-[355px]"><path d="M1 3 Q2 0 5 2" fill="none" stroke="#777" strokeWidth="1.300" /></svg>
      </div>
      <div className="flex h-[459px] shrink-0 flex-col border-b border-[#8d8d8d] bg-white pt-[44px]">
        <div className="flex">
          <div className="flex w-[72px] items-center pt-[30px] pl-[7px]">
            <span className="text-[16px] leading-[24px] tracking-[0.500px] [writing-mode:vertical-rl]">Row</span>
          </div>
          <HeatMap />
          <div className="ml-[9px] box-border flex h-[351px] w-[11px] flex-col-reverse border border-black">
            {ramp.map((c) => (
              <div key={c} className="flex-1" style={{ backgroundColor: c }} />
            ))}
          </div>
        </div>
        <div className="mt-[32px] text-center text-[18px] leading-[26px] tracking-[0.200px]">Panel</div>
      </div>
      <div className="flex flex-1 items-start pt-[4px] pl-[4px] text-[18px]">
        <Select className="w-[222px] pl-[11px] tracking-[0.3px]">Sync with Any</Select>
        <Select className="ml-[9px] w-[464px] pl-[7px]">
          <div className="h-[19px] w-[72px] bg-[linear-gradient(90deg,#b822ff_0%,#5522ff_13%,#0822f0_25%,#22d828_40%,#40ff30_48%,#ffff30_63%,#ffd430_76%,#ff9a28_88%,#ff1020_100%)]" />
          <span className="pl-[4px]">Rainbow</span>
        </Select>
      </div>
    </div>
  );
}

export default function App() {
  return (
    <div className={"relative flex h-[1280px] w-[1661px] flex-col overflow-hidden bg-[#ededed] text-black " + FONT}>
      <div className="h-[2px] shrink-0 bg-[#6b5a50]" />
      <div className="grid h-[22px] shrink-0 grid-cols-[1fr_auto_1fr] items-center rounded-t-[4px] border-b border-[#d2d2d2] bg-[#f6f6f6]">
        <div className="flex gap-[8px] pl-[7px]">
          <div className="size-[12px] rounded-full border border-[#cdcdcd] bg-[#dcdcdc]" />
          <div className="size-[12px] rounded-full border border-[#cdcdcd] bg-[#dcdcdc]" />
          <div className="size-[12px] rounded-full border border-[#cdcdcd] bg-[#dcdcdc]" />
        </div>
        <div className="pt-[2px] font-['Liberation_Sans',sans-serif] text-[14px] tracking-[-0.1px] text-[#a8a8a8]">Curating: Rutherglen RDI : 10x6</div>
        <div />
      </div>
      <Toolbar />
      <div className="box-border h-[27px] shrink-0 border-t border-b border-l border-[#999] bg-white pl-[2px] text-[18px] leading-[24px] tracking-[0.2px]">Unsaved changes: 1</div>
      <div className="mt-[2px] flex h-[1064px] shrink-0 border-t border-[#555] pt-[1px] pl-[2px]">
        <LeftColumn />
        <RightColumn />
      </div>
      <div className="flex h-[8px] shrink-0 items-center border-t border-[#a0a0a0] pl-[2px]">
        <svg width="19" height="6"><path d="M0 5 L3.500 0 L7 5 Z M11 0 H18 L14.500 5 Z" fill="#888" /></svg>
        <svg width="6" height="4" className="ml-[804px]"><path d="M1 3 Q2 0 5 2" fill="none" stroke="#777" strokeWidth="1.300" /></svg>
      </div>
      <div className={"ml-px box-border h-[28px] shrink-0 border-b-2 border-[#777] bg-[#bfbfbf] pl-[2px] leading-[27px] " + TITLE}>Curation Messages</div>
      <div className="ml-px box-border flex h-[58px] shrink-0 border-b border-l border-[#999] bg-white">
        <div className="flex-1 pl-[1px] font-['DejaVu_Sans_Mono',monospace] text-[11.700px] leading-[18px] whitespace-pre">{"Added (p)  APEX/Berry"}</div>
        <div className="w-[17px] border-l border-[#e4e4e4] bg-[#f8f8f8]" />
      </div>
      <div className="flex flex-1 items-center border-b border-[#888] pl-[7px] text-[18px]">
        <Btn className="w-[76px]">Clear</Btn>
        <div className="ml-[12px]"><Check on /></div>
        <span className="pt-[4px] pl-[3px] tracking-[0.2px]">Follow</span>
      </div>
      <Dialog />
    </div>
  );
}
